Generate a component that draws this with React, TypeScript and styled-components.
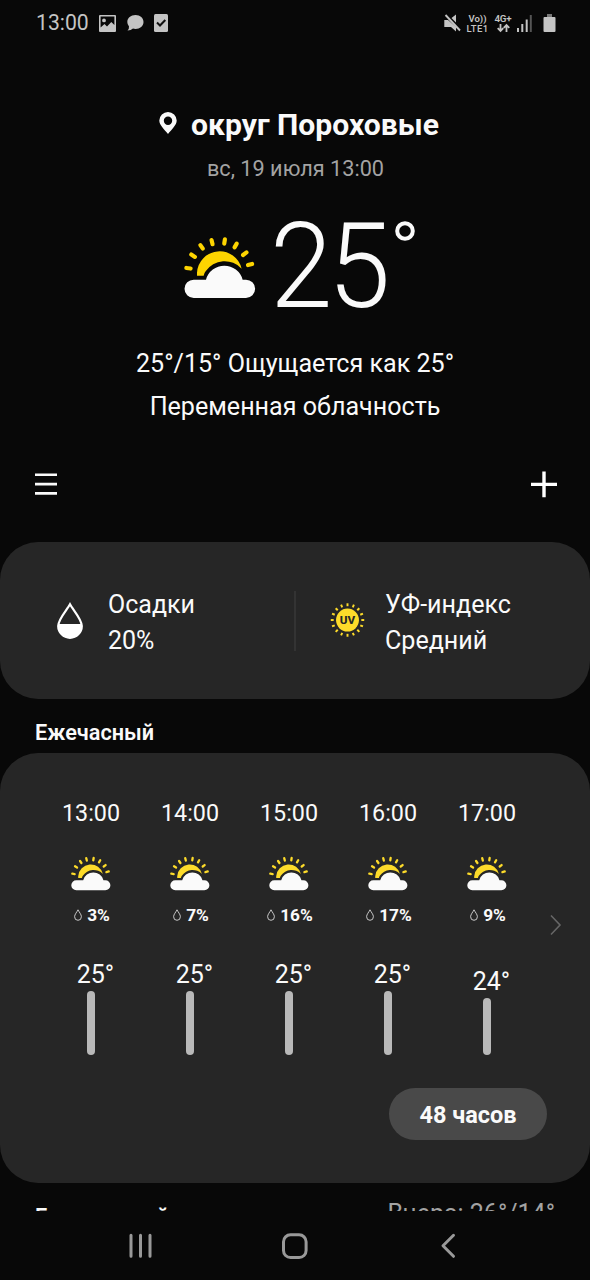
import React from "react";
import styled, { createGlobalStyle } from "styled-components";

const Global = createGlobalStyle`
  * { box-sizing: border-box; }
  body { margin: 0; background: #080808; }
`;

const Screen = styled.div`
  width: 590px;
  height: 1280px;
  display: flex;
  flex-direction: column;
  overflow: hidden;
  background: #080808;
  color: #fafafa;
  font-family: Roboto, "Liberation Sans", sans-serif;
`;

const Text = styled.span<{ $size: number; $weight?: number; $color?: string; $spacing?: number; $line?: number }>`
  display: block;
  white-space: nowrap;
  font-size: ${(p) => p.$size}px;
  font-weight: ${(p) => p.$weight ?? 400};
  color: ${(p) => p.$color ?? "#fafafa"};
  letter-spacing: ${(p) => p.$spacing ?? 0}px;
  line-height: ${(p) => p.$line ?? 30}px;
`;

const Icon = styled.svg`
  display: block;
  flex: none;
  overflow: visible;
`;

const StatusBar = styled.header`
  height: 47px;
  padding: 0 34px 0 36px;
  display: flex;
  justify-content: space-between;
`;

const StatusGroup = styled.div<{ $gap: number }>`
  height: 46px;
  display: flex;
  align-items: center;
  gap: ${(p) => p.$gap}px;
`;

const NetworkLabel = styled.div<{ $width: number }>`
  width: ${(p) => p.$width}px;
  display: flex;
  flex-direction: column;
  align-items: center;
`;

const Hero = styled.section`
  height: 413px;
  padding-top: 60px;
  display: flex;
  flex-direction: column;
  align-items: center;
`;

const PlaceRow = styled.div`
  height: 36px;
  display: flex;
  align-items: center;
  gap: 14px;
  padding-left: 8px;
`;

const PinSlot = styled.div`
  padding-bottom: 5px;
`;

const DateRow = styled.div`
  margin-top: 11px;
  padding-left: 1px;
`;

const CurrentRow = styled.div`
  height: 130px;
  width: 231px;
  margin: 18px 0 0 9px;
  display: flex;
  align-items: flex-start;
`;

const CurrentIcon = styled.div`
  width: 86px;
  padding-top: 34px;
`;

const BigNumber = styled.div`
  width: 125px;
  font-size: 119px;
  font-weight: 300;
  line-height: 130px;
  letter-spacing: -4.5px;
  white-space: nowrap;
  transform: scaleX(0.945);
  transform-origin: 0 50%;
`;

const DegreeMark = styled.div`
  padding-top: 19px;
`;

const Summary = styled.div`
  margin-top: 10px;
  display: flex;
  flex-direction: column;
  align-items: center;
`;

const Toolbar = styled.nav`
  height: 82px;
  padding: 10px 33px 0 35px;
  display: flex;
  justify-content: space-between;
  align-items: flex-start;
`;

const Card = styled.section<{ $height: number }>`
  flex: none;
  height: ${(p) => p.$height}px;
  border-radius: 38px;
  background: #262626;
`;

const IndexCard = styled(Card)`
  display: grid;
  grid-template-columns: 294px 2px 1fr;
  align-items: center;
`;

const Divider = styled.div`
  height: 60px;
  background: #333;
`;

const IndexItem = styled.div<{ $left: number; $gap: number }>`
  display: flex;
  align-items: center;
  padding-left: ${(p) => p.$left}px;
  gap: ${(p) => p.$gap}px;
`;

const IndexText = styled.div`
  padding-top: 4px;
`;

const Heading = styled.div`
  flex: none;
  height: 54px;
  padding: 19px 35px 0;
`;

const HourlyCard = styled(Card)`
  display: flex;
  flex-direction: column;
`;

const HourGrid = styled.div`
  height: 302px;
  padding-left: 41px;
  display: grid;
  grid-template-columns: repeat(5, 99px) 54px;
`;

const Hour = styled.div`
  display: flex;
  flex-direction: column;
  align-items: center;
  padding-top: 45px;
`;

const HourTime = styled.div`
  padding-left: 1px;
`;

const HourIcon = styled.div`
  margin-top: 28px;
`;

const Chance = styled.div`
  margin-top: 9px;
  padding-left: 3px;
  display: flex;
  align-items: center;
  gap: 5px;
`;

const Temperature = styled.div`
  flex: 1;
  display: flex;
  flex-direction: column;
  align-items: center;
  justify-content: flex-end;
`;

const TemperatureLabel = styled.div`
  padding-left: 10px;
  margin-bottom: 1px;
`;

const Bar = styled.div<{ $height: number }>`
  width: 8px;
  height: ${(p) => p.$height}px;
  margin-left: 1px;
  border-radius: 4px;
  background: #b9b9b9;
`;

const More = styled.div`
  padding: 162px 0 0 14px;
`;

const PillRow = styled.div`
  display: flex;
  justify-content: flex-end;
  padding: 33px 43px 0 0;
`;

const Pill = styled.button`
  width: 158px;
  height: 52px;
  padding: 2px 0 0;
  border: 0;
  border-radius: 26px;
  background: #494949;
  font-family: inherit;
`;

const DailyHeader = styled.div`
  flex: none;
  height: 28px;
  padding: 16px 35px 0 35px;
  display: flex;
  justify-content: space-between;
  overflow: hidden;
`;

const DailyTitle = styled.div`
  padding-top: 3px;
`;

const NavBar = styled.nav`
  flex: none;
  height: 69px;
  display: flex;
  justify-content: space-between;
  align-items: center;
  padding: 0 135px 0 129px;
`;

const HomeSlot = styled.div`
  padding-right: 4px;
`;

const RAY_ANGLES = [-82, -57.5, -35, -14, 9, 30.5, 53, 75];

const PartlyCloudy = ({ width, yellow = "#fdd400" }: { width: number; yellow?: string }) => (
  <Icon width={width} height={(width * 188) / 214} viewBox="42 108 214 188">
    <path d="M81 227V218A68 68 0 0 1 215 206A69 69 0 0 0 107 214Q102 220 101 227Z" fill={yellow} />
    {RAY_ANGLES.map((a) => (
      <path key={a} d="M149 130V117" transform={`rotate(${a} 149 218)`} stroke={yellow} strokeWidth={12.5} strokeLinecap="round" />
    ))}
    <path d="M71 239H108A57 57 0 0 1 218 239H228A27.5 27.5 0 0 1 228 294H71A27.5 27.5 0 0 1 71 239Z" fill="#fafafa" />
  </Icon>
);

const UvIcon = () => (
  <Icon width={35} height={37} viewBox="-18 -18 36 37">
    <circle r={11.8} fill="#fddb2a" />
    {Array.from({ length: 16 }, (_, i) => (
      <path key={i} d="M0 -14.2V-17.2" transform={`rotate(${i * 22.5})`} stroke="#fddb2a" strokeWidth={2} />
    ))}
    <text y={4.3} textAnchor="middle" fontSize={12} fontWeight={800} fill="#262626">UV</text>
  </Icon>
);

const SmallDrop = () => (
  <Icon width={8} height={12} viewBox="0 0 8 12" fill="none">
    <path d="M4 .8C3 3 .6 5.400.6 7.700A3.400 3.600 0 0 0 7.400 7.700C7.400 5.400 5 3 4 .8Z" stroke="#d8d8d8" strokeWidth={0.9} />
  </Icon>
);

const HOURS = [
  { time: "13:00", chance: "3%", temp: "25°", bar: 64 },
  { time: "14:00", chance: "7%", temp: "25°", bar: 64 },
  { time: "15:00", chance: "16%", temp: "25°", bar: 64 },
  { time: "16:00", chance: "17%", temp: "25°", bar: 64 },
  { time: "17:00", chance: "9%", temp: "24°", bar: 57 },
];

const STATUS = "#c4c4c4";

export default function App() {
  return (
    <Screen>
      <Global />
      <StatusBar>
        <StatusGroup $gap={10.5}>
          <Text $size={21.2} $line={32} $color={STATUS}>13:00</Text>
          <Icon width={17} height={17} viewBox="0 0 17 17">
            <path fillRule="evenodd" fill={STATUS} d="M1 0H16Q17 0 17 1V16Q17 17 16 17H1Q0 17 0 16V1Q0 0 1 0ZM1.600 1.600V12.500L5.500 9L8 11.500L12.300 7L15.400 10V1.600ZM5 3.500A1.900 1.900 0 1 1 5 7.300A1.900 1.900 0 0 1 5 3.500Z" />
          </Icon>
          <Icon width={17} height={16} viewBox="0 0 17 16">
            <path fill={STATUS} d="M8.500 0C13.200 0 16.500 3 16.500 7C16.500 11 13 14 8.500 14Q7 14 6 13.600Q4 15.500 .5 15.500Q2.300 13.500 2 11.500Q.3 9.700.3 7C.3 3 3.800 0 8.500 0Z" />
          </Icon>
          <Icon width={14} height={18} viewBox="0 0 14 18">
            <rect width={14} height={18} rx={1.500} fill={STATUS} />
            <path d="M3 8.500L6 11.500L11.300 6" stroke="#111" strokeWidth={2} fill="none" />
          </Icon>
        </StatusGroup>
        <StatusGroup $gap={5}>
          <Icon width={17} height={18} viewBox="0 0 17 18">
            <path fill={STATUS} d="M.3 6H4L12 13V17.500L7 13H.3ZM7.500 4L12 .5V8.500Z" />
            <path d="M1.500 1L16 16.500" stroke={STATUS} strokeWidth={1.900} />
          </Icon>
          <NetworkLabel $width={23}>
            <Text $size={9.5} $weight={600} $line={12} $color={STATUS}>Vo))</Text>
            <Text $size={9.5} $weight={500} $line={8} $spacing={0.4} $color={STATUS}>LTE1</Text>
          </NetworkLabel>
          <NetworkLabel $width={18}>
            <Text $size={9.8} $weight={600} $line={10} $spacing={-0.2} $color={STATUS}>4G+</Text>
            <Icon width={13} height={8} viewBox="0 0 13 8" fill="none" stroke={STATUS} strokeWidth={1.800}>
              <path d="M3.500 0V7M.7 4.200L3.500 7L6.300 4.200M9.500 8V1M6.700 3.800L9.500 1L12.300 3.800" />
            </Icon>
          </NetworkLabel>
          <Icon width={16} height={17} viewBox="0 0 16 17">
            <path fill={STATUS} d="M0 13H2V17H0ZM4.300 9H6.300V17H4.300ZM8.700 4.500H10.700V17H8.700Z" />
            <path fill="#555" d="M12.800 0H14.800V17H12.800Z" />
          </Icon>
          <Icon width={18} height={18} viewBox="0 0 18 18">
            <path fill="#777" d="M9 0H14V4H9Z" />
            <rect x={5.500} y={3} width={12} height={15} rx={1} fill={STATUS} />
          </Icon>
        </StatusGroup>
      </StatusBar>

      <Hero>
        <PlaceRow>
          <PinSlot>
            <Icon width={18} height={22} viewBox="0 0 18 22">
              <path fillRule="evenodd" fill="#fafafa" d="M9 0A8.700 8.700 0 0 1 17.700 8.600C17.700 13 12.500 18 9 22C5.500 18 .3 13 .3 8.600A8.700 8.700 0 0 1 9 0ZM9 4.600A4.200 4.200 0 1 0 9 13A4.200 4.200 0 0 0 9 4.600Z" />
            </Icon>
          </PinSlot>
          <Text $size={30.1} $weight={700} $line={36}>округ Пороховые</Text>
        </PlaceRow>
        <DateRow>
          <Text $size={21.7} $color="#a3a3a3">вс, 19 июля 13:00</Text>
        </DateRow>
        <CurrentRow>
          <CurrentIcon><PartlyCloudy width={71.3} /></CurrentIcon>
          <BigNumber>25</BigNumber>
          <DegreeMark>
            <Icon width={20} height={20} viewBox="0 0 20 20">
              <circle cx={10} cy={10} r={7.800} fill="none" stroke="#fafafa" strokeWidth={4} />
            </Icon>
          </DegreeMark>
        </CurrentRow>
        <Summary>
          <Text $size={25.1} $line={43}>25°/15° Ощущается как 25°</Text>
          <Text $size={25.1} $line={43}>Переменная облачность</Text>
        </Summary>
      </Hero>

      <Toolbar>
        <Icon width={22} height={25} viewBox="0 0 22 25">
          <path d="M0 4.700H22M0 14.100H22M0 23.400H22" stroke="#fafafa" strokeWidth={2.600} />
        </Icon>
        <Icon width={26} height={28} viewBox="0 0 26 28">
          <path d="M0 14.400H26M13 1.600V27.200" stroke="#fff" strokeWidth={3.400} />
        </Icon>
      </Toolbar>

      <IndexCard $height={157}>
        <IndexItem $left={57} $gap={25}>
          <Icon width={26} height={37} viewBox="0 0 26 37">
            <path d="M13 2.300C10 8 1.200 17 1.200 24A11.800 11.800 0 0 0 24.800 24C24.800 17 16 8 13 2.300Z" fill="none" stroke="#fff" strokeWidth={2.200} />
            <path d="M1 22H25V24A12 12 0 0 1 1 24Z" fill="#fff" />
          </Icon>
          <IndexText>
            <Text $size={25} $line={36}>Осадки</Text>
            <Text $size={25} $line={36}>20%</Text>
          </IndexText>
        </IndexItem>
        <Divider />
        <IndexItem $left={34} $gap={20}>
          <UvIcon />
          <IndexText>
            <Text $size={25.1} $line={36}>УФ-индекс</Text>
            <Text $size={25.1} $line={36}>Средний</Text>
          </IndexText>
        </IndexItem>
      </IndexCard>

      <Heading>
        <Text $size={21.700} $weight={600}>Ежечасный</Text>
      </Heading>

      <HourlyCard $height={430}>
        <HourGrid>
          {HOURS.map((h) => (
            <Hour key={h.time}>
              <HourTime><Text $size={23.300}>{h.time}</Text></HourTime>
              <HourIcon><PartlyCloudy width={39.500} yellow="#fddb2a" /></HourIcon>
              <Chance>
                <SmallDrop />
                <Text $size={17.300} $weight={700}>{h.chance}</Text>
              </Chance>
              <Temperature>
                <TemperatureLabel><Text $size={25}>{h.temp}</Text></TemperatureLabel>
                <Bar $height={h.bar} />
              </Temperature>
            </Hour>
          ))}
          <More>
            <Icon width={11} height={20} viewBox="0 0 11 20">
              <path d="M1 .5L10 10L1 19.500" fill="none" stroke="#666" strokeWidth={1.600} />
            </Icon>
          </More>
        </HourGrid>
        <PillRow>
          <Pill><Text $size={23.500} $weight={700}>48 часов</Text></Pill>
        </PillRow>
      </HourlyCard>

      <DailyHeader>
        <DailyTitle><Text $size={21.700} $weight={600}>Ежедневный</Text></DailyTitle>
        <Text $size={25} $color="#a3a3a3">Вчера: 26°/14°</Text>
      </DailyHeader>

      <NavBar>
        <Icon width={23} height={27} viewBox="0 0 23 27">
          <path d="M2 3.300V24.300M11.500 3.300V24.300M21 3.300V24.300" stroke="#999" strokeWidth={3} strokeLinecap="round" />
        </Icon>
        <HomeSlot>
          <Icon width={26} height={28} viewBox="0 0 26 28">
            <rect x={1.500} y={2.800} width={22.600} height={22.700} rx={7} fill="none" stroke="#999" strokeWidth={3} />
          </Icon>
        </HomeSlot>
        <Icon width={14} height={27} viewBox="0 0 14 27">
          <path d="M12.500 3.300L2 13.800L12.500 24.300" fill="none" stroke="#999" strokeWidth={3} strokeLinecap="round" strokeLinejoin="round" />
        </Icon>
      </NavBar>
    </Screen>
  );
}
